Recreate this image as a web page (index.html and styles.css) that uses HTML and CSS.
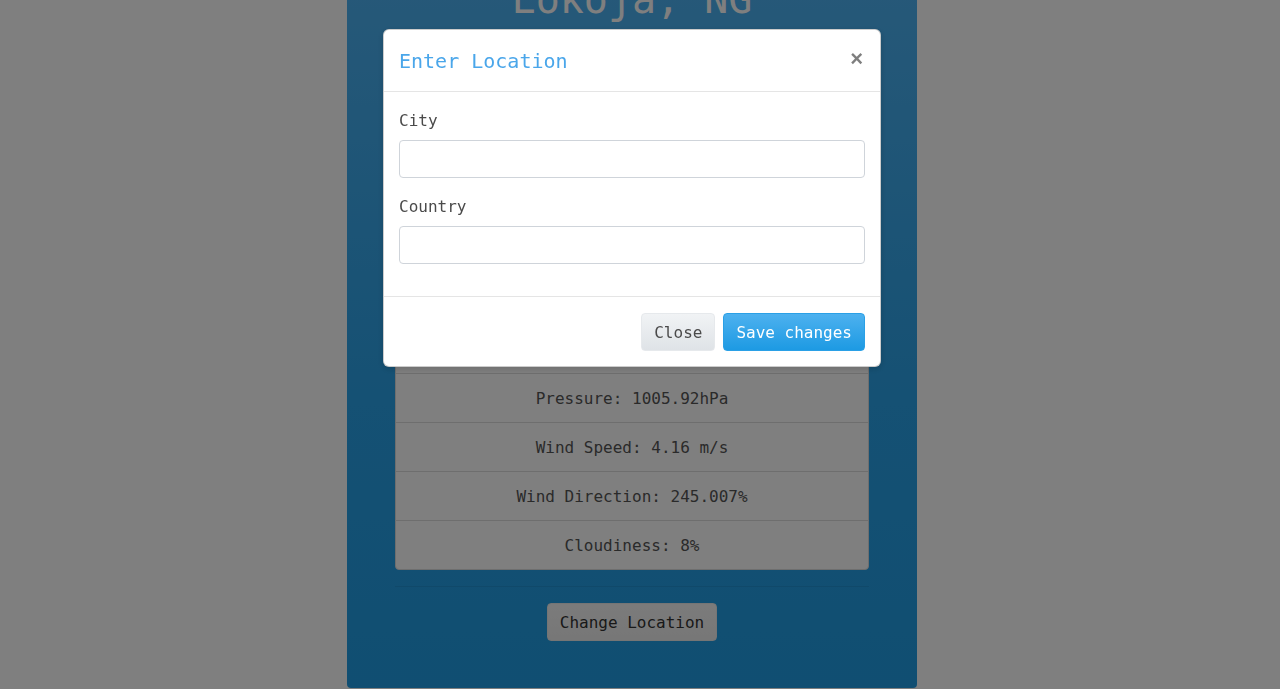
FILE: index.html
```html
<!DOCTYPE html>
<html lang="en">
<head>
<meta charset="utf-8">
<title>Weather</title>
<link rel="stylesheet" href="styles.css">
</head>
<body>
<main class="card">
  <h1 class="city-title">Lokoja, NG</h1>
  <section class="summary">
    <div class="temp">31°C</div>
    <div class="desc">broken clouds</div>
  </section>
  <ul class="list-group">
    <li class="list-item">Temperature: 31.2°C</li>
    <li class="list-item">Humidity: 62%</li>
    <li class="list-item">Pressure: 1005.92hPa</li>
    <li class="list-item">Wind Speed: 4.16 m/s</li>
    <li class="list-item">Wind Direction: 245.007%</li>
    <li class="list-item">Cloudiness: 8%</li>
  </ul>
  <hr class="divider">
  <div class="actions">
    <button class="btn btn-light" type="button">Change Location</button>
  </div>
</main>

<div class="backdrop">
  <div class="modal">
    <div class="modal-header">
      <h4 class="modal-title">Enter Location</h4>
      <button class="close" type="button" aria-label="Close">×</button>
    </div>
    <div class="modal-body">
      <div class="form-group">
        <label class="label" for="city">City</label>
        <input class="input" id="city" type="text">
      </div>
      <div class="form-group last">
        <label class="label" for="country">Country</label>
        <input class="input" id="country" type="text">
      </div>
    </div>
    <div class="modal-footer">
      <button class="btn btn-default" type="button">Close</button>
      <button class="btn btn-primary" type="button">Save changes</button>
    </div>
  </div>
</div>
</body>
</html>
```

FILE: styles.css
```css
* { box-sizing: border-box; }

html, body {
  margin: 0;
  padding: 0;
  height: 100%;
  overflow: hidden;
}

body {
  padding-right: 16px;
  background: #ffffff;
  font-family: "DejaVu Sans Mono", "Liberation Mono", monospace;
  font-size: 16px;
  line-height: 24px;
  color: #333;
}

.card {
  width: 570px;
  margin: -25px auto 0;
  padding: 0 48px 47px;
  background: linear-gradient(to bottom, #4eb2f2 0%, #2aa2e8 60%, #209de4 100%);
  border-radius: 0 0 4px 4px;
}

.city-title {
  margin: 0;
  font-size: 40px;
  line-height: 48px;
  font-weight: normal;
  color: #ffffff;
  text-align: center;
}

.summary {
  padding: 30px 0;
  text-align: center;
  color: #fff;
}

.temp {
  font-size: 96px;
  line-height: 140px;
}

.desc {
  font-size: 20px;
  line-height: 32px;
}

.list-group {
  list-style: none;
  margin: 20px 0 0;
  padding: 0;
}

.list-item {
  background: #ffffff;
  border: 1px solid #dddddd;
  margin-bottom: -1px;
  padding: 13px 15px 11px;
  line-height: 24px;
  text-align: center;
  color: #555;
}

.list-item:first-child { border-radius: 4px 4px 0 0; }
.list-item:last-child { border-radius: 0 0 4px 4px; margin-bottom: 0; }

.divider {
  margin: 16px 0;
  border: 0;
  border-top: 1px solid rgba(0, 0, 0, 0.07);
}

.actions {
  display: flex;
  justify-content: center;
}

.btn {
  font-family: "DejaVu Sans Mono", "Liberation Mono", monospace;
  font-size: 16px;
  line-height: 24px;
  padding: 7px 12px 5px;
  border: 1px solid transparent;
  border-radius: 4px;
  cursor: pointer;
}

.btn-light {
  background: linear-gradient(to bottom, #f7f7f7, #eeeeee);
  border-color: #eaeaea;
  color: #333;
}

.backdrop {
  position: fixed;
  inset: 0;
  padding-right: 16px;
  background: rgba(0, 0, 0, 0.5);
  display: flex;
  justify-content: center;
  align-items: flex-start;
}

.modal {
  width: 498px;
  margin-top: 29px;
  background: #ffffff;
  border: 1px solid rgba(0, 0, 0, 0.2);
  border-radius: 6px;
  box-shadow: 0 2px 6px rgba(0, 0, 0, 0.15);
}

.modal-header {
  display: flex;
  align-items: center;
  justify-content: space-between;
  padding: 16px 15px 14px;
  border-bottom: 1px solid #e5e5e5;
}

.modal-title {
  margin: 0;
  font-size: 20px;
  line-height: 31px;
  font-weight: normal;
  color: #4aa6ea;
}

.close {
  margin: -6px 2px 0 0;
  padding: 0;
  background: none;
  border: 0;
  font-family: "Liberation Sans", Arial, sans-serif;
  font-size: 22px;
  line-height: 22px;
  font-weight: bold;
  color: #000;
  opacity: 0.5;
  cursor: pointer;
}

.modal-body {
  padding: 15px 15px 16px;
}

.form-group {
  margin-bottom: 15px;
}

.form-group.last { margin-bottom: 16px; }

.label {
  display: block;
  padding-top: 2px;
  margin-bottom: 7px;
  line-height: 24px;
  color: #4a4a4a;
}

.input {
  display: block;
  width: 100%;
  height: 38px;
  padding: 6px 12px;
  font-family: inherit;
  font-size: 16px;
  border: 1px solid #cfd4da;
  border-radius: 4px;
  background: #fff;
}

.modal-footer {
  display: flex;
  justify-content: flex-end;
  gap: 8px;
  padding: 16px 15px 15px;
  border-top: 1px solid #e5e5e5;
}

.btn-default {
  background: linear-gradient(to bottom, #f1f3f5, #dfe3e7);
  border-color: #e6e9ec;
  color: #4a4a4a;
}

.btn-primary {
  background: linear-gradient(to bottom, #4db1ef, #1d9ae3);
  border-color: #2aa0e6;
  color: #ffffff;
}
```
